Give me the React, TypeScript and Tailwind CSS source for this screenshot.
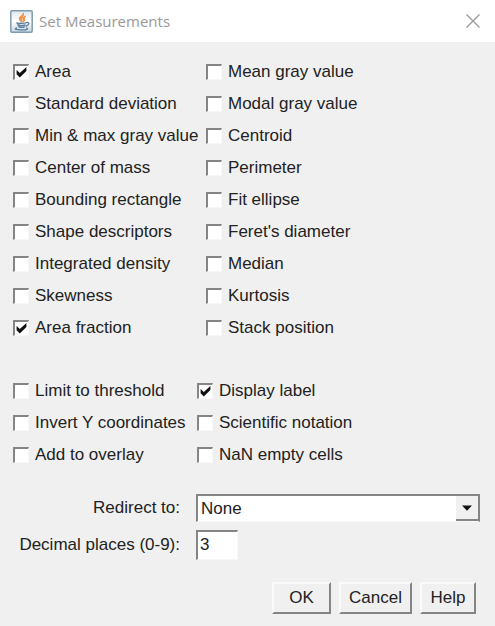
import React from "react";

type Option = { label: string; checked?: boolean };

const measurements: Option[] = [
  { label: "Area", checked: true },
  { label: "Mean gray value" },
  { label: "Standard deviation" },
  { label: "Modal gray value" },
  { label: "Min & max gray value" },
  { label: "Centroid" },
  { label: "Center of mass" },
  { label: "Perimeter" },
  { label: "Bounding rectangle" },
  { label: "Fit ellipse" },
  { label: "Shape descriptors" },
  { label: "Feret's diameter" },
  { label: "Integrated density" },
  { label: "Median" },
  { label: "Skewness" },
  { label: "Kurtosis" },
  { label: "Area fraction", checked: true },
  { label: "Stack position" },
];

const settings: Option[] = [
  { label: "Limit to threshold" },
  { label: "Display label", checked: true },
  { label: "Invert Y coordinates" },
  { label: "Scientific notation" },
  { label: "Add to overlay" },
  { label: "NaN empty cells" },
];

function CheckOption({ label, checked }: Option) {
  return (
    <label className="flex h-8 items-center gap-1.5 whitespace-nowrap">
      <span className="grid size-4 shrink-0">
        <input
          type="checkbox"
          defaultChecked={checked}
          className="peer col-start-1 row-start-1 size-4 appearance-none border-t-2 border-r border-b border-l-2 border-t-[#858585] border-r-[#f8f8f8] border-b-[#f8f8f8] border-l-[#858585] bg-white"
        />
        <svg
          viewBox="0 0 16 16"
          className="pointer-events-none invisible col-start-1 row-start-1 size-4 peer-checked:visible"
          aria-hidden="true"
        >
          <path d="M3.6 6L6.8 9L13.4 3V7L6.8 13.4L3.6 10.2Z" fill="#111" />
        </svg>
      </span>
      {label}
    </label>
  );
}

function DialogButton({ children, className }: { children: string; className: string }) {
  return (
    <button
      type="button"
      className={
        "h-8 border-t-2 border-r-2 border-b-2 border-l-2 border-t-[#fafafa] border-r-[#858585] border-b-[#858585] border-l-[#fafafa] bg-[#f0f0f0] " +
        className
      }
    >
      {children}
    </button>
  );
}

function JavaIcon() {
  return (
    <svg viewBox="0 0 23 23" className="size-[23px]" aria-hidden="true">
      <defs>
        <linearGradient id="tile" x1="0" y1="0" x2="0" y2="1">
          <stop offset="0" stopColor="#dfe8ee" />
          <stop offset="0.5" stopColor="#ffffff" />
          <stop offset="1" stopColor="#c3d4e0" />
        </linearGradient>
      </defs>
      <rect x="0.8" y="0.8" width="21.4" height="21.4" rx="1.2" fill="url(#tile)" stroke="#7f9bb0" strokeWidth="1.5" />
      <path
        d="M13.2 2.8C14 5.5 8.7 6.5 9.2 9C9.4 10.2 11 10.8 11.3 12C12 10.7 10.8 9.8 11.3 8.6C12 7 14.6 5.5 13.2 2.8ZM15.8 6C13.6 7 12.4 8.1 13 9.4C13.4 10.3 13.3 11.2 12.4 12C15.2 10.9 15 9.8 14.3 8.9C13.7 8 14.5 7 15.8 6Z"
        fill="#ee9449"
        stroke="#ee9449"
        strokeWidth="1.1"
      />
      <path
        d="M7 12.8C6.8 13.8 10 13.8 15.8 12.9M7.8 14.8C9.5 15.8 13 15.7 15 15M8.7 16.8C10.5 17.5 12.8 17.4 14.3 16.8M16.3 12.6C19.8 11.6 19.6 14.8 16.2 16.2M6.6 18C3 19.2 8 20 12 19.9C16.5 19.8 18.7 19 17 18.1"
        fill="none"
        stroke="#5c7f9c"
        strokeWidth="1.4"
        strokeLinecap="round"
      />
    </svg>
  );
}

export default function App() {
  return (
    <main className="min-h-screen bg-[#f0f0f0] font-['Liberation_Sans',Arial,sans-serif] text-[17px] leading-5 text-[#222]">
      <header className="flex h-[42px] items-center bg-white pr-3.5 pl-2.5">
        <JavaIcon />
        <h1 className="ml-1.5 flex-1 font-['Open_Sans','Noto_Sans',sans-serif] text-[15px] text-[#999]">
          Set Measurements
        </h1>
        <button type="button" aria-label="Close" className="grid size-4 place-items-center">
          <svg viewBox="0 0 16 16" className="size-4" aria-hidden="true">
            <path d="M1.5 1.5L14.5 14.5M14.5 1.5L1.5 14.5" stroke="#999" strokeWidth="1.3" />
          </svg>
        </button>
      </header>

      <form className="pt-3.5 pr-[15px] pl-[13px]">
        <div className="grid grid-cols-[193px_1fr]">
          {measurements.map((option) => (
            <CheckOption key={option.label} {...option} />
          ))}
        </div>

        <div className="mt-[31px] grid grid-cols-[184px_1fr]">
          {settings.map((option) => (
            <CheckOption key={option.label} {...option} />
          ))}
        </div>

        <div className="mt-[23px] grid grid-cols-[167px_1fr] items-center gap-x-4 gap-y-2">
          <label htmlFor="redirect" className="text-right whitespace-nowrap">
            Redirect to:
          </label>
          <div className="grid">
            <select
              id="redirect"
              defaultValue="None"
              className="col-start-1 row-start-1 h-7 w-full appearance-none border-t-2 border-r-2 border-b border-l-2 border-t-[#858585] border-r-[#858585] border-b-[#f8f8f8] border-l-[#858585] bg-white pl-[3px]"
            >
              <option>None</option>
            </select>
            <span className="pointer-events-none col-start-1 row-start-1 mt-0.5 grid h-[25px] w-6 place-items-center justify-self-end border-r-2 border-b-2 border-[#858585] bg-[#f0f0f0]">
              <svg viewBox="0 0 10 6" className="h-1.5 w-2.5" aria-hidden="true">
                <path d="M0 0.5H10L5 5.8Z" fill="#111" />
              </svg>
            </span>
          </div>
          <label htmlFor="decimals" className="text-right whitespace-nowrap">
            Decimal places (0-9):
          </label>
          <input
            id="decimals"
            type="text"
            defaultValue="3"
            className="h-[30px] w-[42px] border-t-2 border-r border-b border-l-2 border-t-[#858585] border-r-[#f8f8f8] border-b-[#f8f8f8] border-l-[#858585] bg-white pb-0.5 pl-0.5"
          />
        </div>

        <div className="mt-[22px] mr-1 flex justify-end gap-2">
          <DialogButton className="w-[59px]">OK</DialogButton>
          <DialogButton className="w-[73px]">Cancel</DialogButton>
          <DialogButton className="w-14">Help</DialogButton>
        </div>
      </form>
    </main>
  );
}
